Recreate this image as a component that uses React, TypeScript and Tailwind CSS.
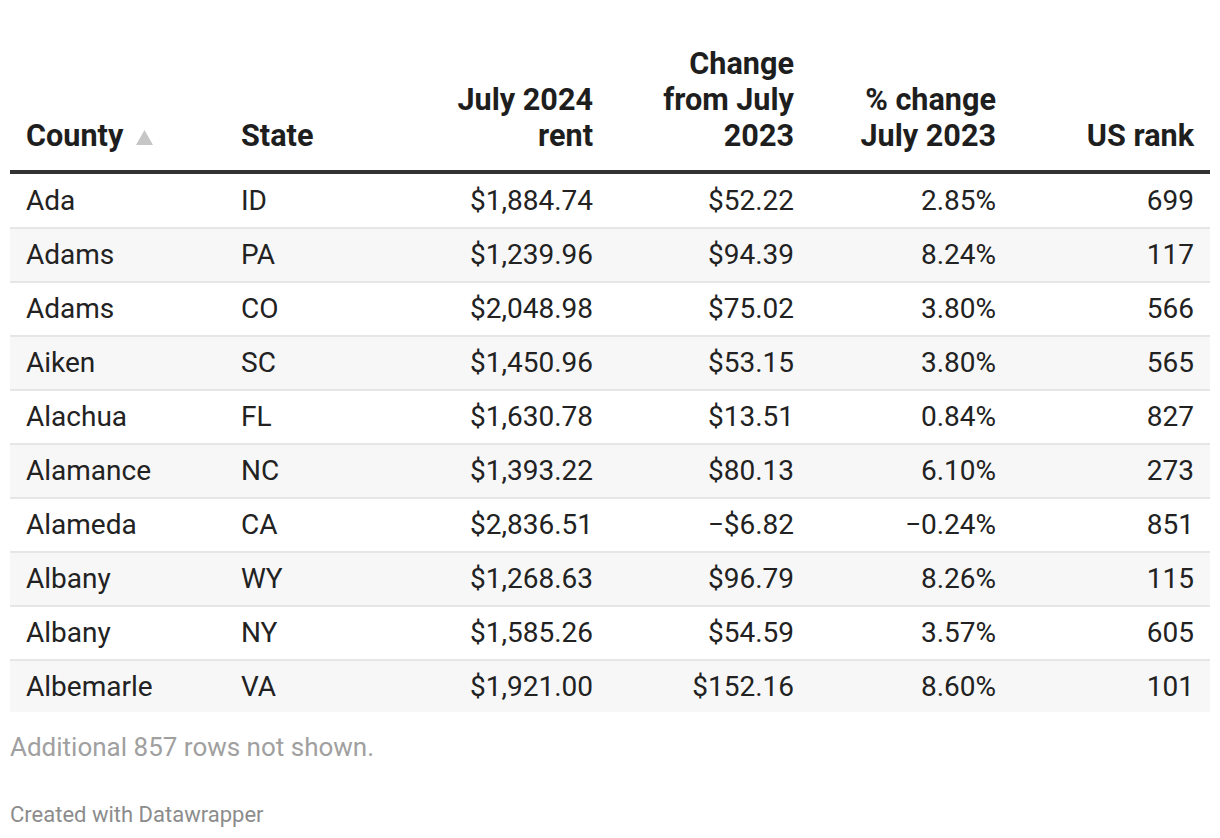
import React from "react";

type Row = [string, string, string, string, string, string];

const rows: Row[] = [
  ["Ada", "ID", "$1,884.74", "$52.22", "2.85%", "699"],
  ["Adams", "PA", "$1,239.96", "$94.39", "8.24%", "117"],
  ["Adams", "CO", "$2,048.98", "$75.02", "3.80%", "566"],
  ["Aiken", "SC", "$1,450.96", "$53.15", "3.80%", "565"],
  ["Alachua", "FL", "$1,630.78", "$13.51", "0.84%", "827"],
  ["Alamance", "NC", "$1,393.22", "$80.13", "6.10%", "273"],
  ["Alameda", "CA", "$2,836.51", "\u2212$6.82", "\u22120.24%", "851"],
  ["Albany", "WY", "$1,268.63", "$96.79", "8.26%", "115"],
  ["Albany", "NY", "$1,585.26", "$54.59", "3.57%", "605"],
  ["Albemarle", "VA", "$1,921.00", "$152.16", "8.60%", "101"],
];

const th =
  "align-bottom font-bold text-[30.6px] leading-[36px] px-[16px] pb-[16px] pt-0 text-[#1e1e1e]";

export default function App() {
  return (
    <div className="w-[1220px] h-[838px] bg-white px-[10px] pt-[46px] text-[#222] font-[Roboto,sans-serif]">
      <table className="w-[1200px] table-fixed border-collapse">
        <colgroup>
          <col className="w-[215px]" />
          <col className="w-[185px]" />
          <col className="w-[199px]" />
          <col className="w-[201px]" />
          <col className="w-[202px]" />
          <col className="w-[198px]" />
        </colgroup>
        <thead>
          <tr className="border-b-4 border-[#333]">
            <th className={th + " text-left"}>
              <span className="inline-flex items-center gap-[13px]">
                County
                <svg width="17" height="15" viewBox="0 0 17 15" className="mt-[2px]">
                  <polygon points="8.5,0 17,15 0,15" fill="#c6c6c6" />
                </svg>
              </span>
            </th>
            <th className={th + " text-left"}>State</th>
            <th className={th + " text-right"}>
              July 2024
              <br />
              rent
            </th>
            <th className={th + " text-right"}>
              Change
              <br />
              from July
              <br />
              2023
            </th>
            <th className={th + " text-right"}>
              % change
              <br />
              July 2023
            </th>
            <th className={th + " text-right"}>US rank</th>
          </tr>
        </thead>
        <tbody>
          {rows.map((r, i) => {
            const last = i === rows.length - 1;
            const h = i === 0 ? "h-[56px] " : last ? "h-[52px] " : "h-[54px] ";
            return (
              <tr
                key={i}
                className={
                  (i % 2 === 1 ? "bg-[#f7f7f7] " : "bg-white ") +
                  (last ? "" : "border-b-2 border-[#e6e6e6]")
                }
              >
                {r.map((c, j) => (
                  <td
                    key={j}
                    className={
                      h +
                      "px-[16px] py-0 align-middle text-[28px] leading-[32px] text-[#222] " +
                      (j < 2 ? "text-left" : "text-right")
                    }
                  >
                    {c}
                  </td>
                ))}
              </tr>
            );
          })}
        </tbody>
      </table>
      <div className="mt-[20px] text-[26px] leading-[30px] text-[#a0a0a0]">
        Additional 857 rows not shown.
      </div>
      <div className="mt-[39px] text-[22px] leading-[28px] text-[#8c8c8c]">
        Created with Datawrapper
      </div>
    </div>
  );
}
